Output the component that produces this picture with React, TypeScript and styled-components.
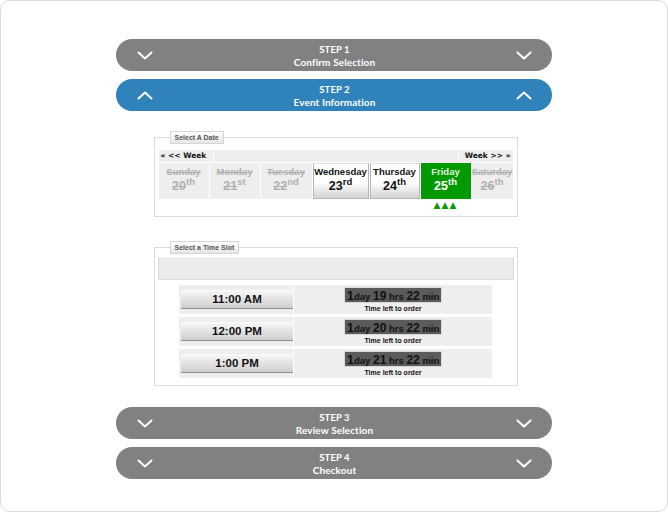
import styled, { createGlobalStyle } from "styled-components";

const GlobalStyle = createGlobalStyle`
  html, body {
    margin: 0;
    padding: 0;
    background: #ffffff;
  }
  * {
    box-sizing: border-box;
  }
`;

const Frame = styled.div`
  width: 668px;
  height: 512px;
  border: 1px solid #dadada;
  border-radius: 10px;
  background: #fff;
  display: flex;
  flex-direction: column;
  align-items: center;
  padding-top: 38px;
`;

const Steps = styled.div`
  width: 436px;
  display: flex;
  flex-direction: column;
  gap: 8px;
`;

const StepBar = styled.div<{ $open?: boolean }>`
  height: 32px;
  border-radius: 16px;
  background: ${(props) => (props.$open ? "#2f82ba" : "#818181")};
  display: flex;
  align-items: center;
  padding: 0 20px 0 21px;
  color: #fff;
  font-family: Lato, "Open Sans", sans-serif;
  font-weight: 700;
`;

const StepText = styled.div`
  flex: 1;
  text-align: center;
  font-size: 10px;
  line-height: 12px;
  padding-top: 1px;
  letter-spacing: 0.1px;
`;

const StepNum = styled.div`
  font-size: 9.5px;
`;

const Content = styled.div`
  display: flex;
  flex-direction: column;
  align-items: center;
  padding: 20px 0 21px 3px;
  gap: 24px;
`;

const Fieldset = styled.fieldset<{ $pad: number; $bottom: number }>`
  width: 364px;
  margin: 0;
  border: 1px solid #dcdcdc;
  padding: ${(props) => `5px ${props.$pad}px ${props.$bottom}px`};
  min-width: 0;
`;

const Legend = styled.legend<{ $pad: number }>`
  margin-left: ${(props) => 16 - props.$pad - 1}px;
  padding: 1px 4px;
  font-family: "Liberation Sans", Arial, sans-serif;
  font-weight: 700;
  font-size: 7px;
  line-height: 9px;
  color: #555;
  background: linear-gradient(#ffffff, #e6e6e6);
  border: 1px solid #d6d6d6;
`;

const NavRow = styled.div`
  display: grid;
  grid-template-columns: 54px 1fr 54px;
  gap: 1px;
  height: 12px;
  margin-top: 1px;
  font-family: "DejaVu Sans", Verdana, sans-serif;
  font-weight: 700;
  font-size: 7.5px;
  line-height: 12px;
  color: #111;
`;

const NavCell = styled.div<{ $align?: string }>`
  background: #eeeeee;
  text-align: ${(props) => props.$align || "left"};
  padding: 0 2px;
  white-space: nowrap;
`;

const DaysRow = styled.div`
  display: grid;
  grid-template-columns: 50px 50px 51px 56px 50px 50px 1fr;
  column-gap: 1px;
  margin-top: 1px;
`;

const DayCell = styled.div<{ $state: "off" | "on" | "sel" }>`
  height: 36px;
  display: flex;
  flex-direction: column;
  align-items: center;
  padding-top: 3px;
  font-family: "Liberation Sans", Arial, sans-serif;
  font-weight: 700;
  color: ${(props) =>
    props.$state === "off" ? "#b0b0b0" : props.$state === "sel" ? "#fff" : "#111"};
  background: ${(props) =>
    props.$state === "off"
      ? "#eeeeee"
      : props.$state === "sel"
      ? "#009a00"
      : "linear-gradient(#ffffff 0%, #ffffff 55%, #d2d2d2 100%)"};
  border: ${(props) => (props.$state === "on" ? "1px solid #b5b5b5" : "none")};
  border-top-color: #e0e0e0;
  ${(props) => props.$state === "on" && "padding-top: 2px;"}
`;

const DayName = styled.span<{ $strike?: boolean; $pale?: boolean }>`
  font-size: 9.5px;
  line-height: 11px;
  text-decoration: ${(props) => (props.$strike ? "line-through" : "none")};
  color: ${(props) => (props.$pale ? "#dff5df" : "inherit")};
`;

const DayNum = styled.span`
  font-size: 12.5px;
  line-height: 18px;
  white-space: nowrap;
`;

const Struck = styled.span<{ $strike?: boolean }>`
  text-decoration: ${(props) => (props.$strike ? "line-through" : "none")};
`;

const Sup = styled.sup`
  font-size: 9.5px;
  line-height: 0;
  vertical-align: baseline;
  position: relative;
  top: -5px;
`;

const Arrows = styled.div`
  grid-column: 6;
  text-align: center;
  color: #0a9a0a;
  font-family: "DejaVu Sans", sans-serif;
  font-size: 9px;
  line-height: 10px;
  letter-spacing: 1px;
  padding-top: 1px;
`;

const SlotBar = styled.div`
  height: 22px;
  background: #ececec;
  border: 1px solid #dedede;
  margin-top: -1px;
`;

const SlotList = styled.div`
  width: 313px;
  margin: 5px auto 0;
  display: flex;
  flex-direction: column;
  gap: 3px;
`;

const SlotRow = styled.div`
  display: grid;
  grid-template-columns: 114px 1fr;
  gap: 1px;
  height: 29px;
`;

const SlotCell = styled.div`
  background: #eeeeee;
`;

const TimeCell = styled(SlotCell)`
  display: flex;
  align-items: center;
  padding-left: 2px;
`;

const TimeButton = styled.div`
  width: 100%;
  height: 19px;
  background: linear-gradient(#f6f6f6 0%, #e6e6e6 40%, #cfcfcf 100%);
  border-bottom: 1px solid #8e8e8e;
  border-top: 1px solid #fafafa;
  font-family: "Liberation Sans", Arial, sans-serif;
  font-weight: 700;
  font-size: 11.5px;
  line-height: 17px;
  text-align: center;
  color: #111;
`;

const CountCell = styled(SlotCell)`
  display: flex;
  flex-direction: column;
  align-items: center;
  padding-top: 2px;
`;

const Countdown = styled.div`
  height: 16px;
  background: #5b5b5b;
  border: 1px solid #d9d9d9;
  padding: 0 2px;
  font-family: "Liberation Sans", Arial, sans-serif;
  font-weight: 700;
  color: #111;
  line-height: 14px;
  white-space: nowrap;
`;

const Big = styled.span<{ $size: number }>`
  font-size: ${(props) => props.$size}px;
`;

const Small = styled.span`
  font-size: 9.5px;
`;

const LeftText = styled.div`
  font-family: "Liberation Sans", Arial, sans-serif;
  font-weight: 700;
  font-size: 7px;
  line-height: 9px;
  color: #111;
  margin-top: 1px;
`;

function Chevron({ up }: { up?: boolean }) {
  return (
    <svg width="16" height="9" viewBox="0 0 16 9">
      <path
        d={up ? "M1.5 7.5 L8 1.5 L14.5 7.5" : "M1.5 1.5 L8 7.5 L14.5 1.5"}
        fill="none"
        stroke="#fff"
        strokeWidth="2"
        strokeLinecap="round"
        strokeLinejoin="round"
      />
    </svg>
  );
}

function Step({ num, title, open }: { num: number; title: string; open?: boolean }) {
  return (
    <StepBar $open={open}>
      <Chevron up={open} />
      <StepText>
        <StepNum>STEP {num}</StepNum>
        <div>{title}</div>
      </StepText>
      <Chevron up={open} />
    </StepBar>
  );
}

const days: { name: string; num: number; suf: string; state: "off" | "on" | "sel" }[] = [
  { name: "Sunday", num: 20, suf: "th", state: "off" },
  { name: "Monday", num: 21, suf: "st", state: "off" },
  { name: "Tuesday", num: 22, suf: "nd", state: "off" },
  { name: "Wednesday", num: 23, suf: "rd", state: "on" },
  { name: "Thursday", num: 24, suf: "th", state: "on" },
  { name: "Friday", num: 25, suf: "th", state: "sel" },
  { name: "Saturday", num: 26, suf: "th", state: "off" },
];

const slots = [
  { time: "11:00 AM", hrs: 19 },
  { time: "12:00 PM", hrs: 20 },
  { time: "1:00 PM", hrs: 21 },
];

export default function App() {
  return (
    <>
      <GlobalStyle />
      <Frame>
        <Steps>
          <Step num={1} title="Confirm Selection" />
          <Step num={2} title="Event Information" open />
        </Steps>
        <Content>
          <Fieldset $pad={4} $bottom={6}>
            <Legend $pad={4}>Select A Date</Legend>
            <NavRow>
              <NavCell>« &lt;&lt; Week</NavCell>
              <NavCell />
              <NavCell $align="right">Week &gt;&gt; »</NavCell>
            </NavRow>
            <DaysRow>
              {days.map((d) => (
                <DayCell key={d.name} $state={d.state}>
                  <DayName $strike={d.state === "off"} $pale={d.state === "sel"}>
                    {d.name}
                  </DayName>
                  <DayNum>
                    <Struck $strike={d.state === "off"}>{d.num}</Struck>
                    <Sup>{d.suf}</Sup>
                  </DayNum>
                </DayCell>
              ))}
              <Arrows>▲▲▲</Arrows>
            </DaysRow>
          </Fieldset>
          <Fieldset $pad={3} $bottom={7}>
            <Legend $pad={3}>Select a Time Slot</Legend>
            <SlotBar />
            <SlotList>
              {slots.map((s) => (
                <SlotRow key={s.time}>
                  <TimeCell>
                    <TimeButton>{s.time}</TimeButton>
                  </TimeCell>
                  <CountCell>
                    <Countdown>
                      <Big $size={13}>1</Big>
                      <Small>day </Small>
                      <Big $size={12}>{s.hrs}</Big>
                      <Small> hrs </Small>
                      <Big $size={12}>22</Big>
                      <Small> min</Small>
                    </Countdown>
                    <LeftText>Time left to order</LeftText>
                  </CountCell>
                </SlotRow>
              ))}
            </SlotList>
          </Fieldset>
        </Content>
        <Steps>
          <Step num={3} title="Review Selection" />
          <Step num={4} title="Checkout" />
        </Steps>
      </Frame>
    </>
  );
}
